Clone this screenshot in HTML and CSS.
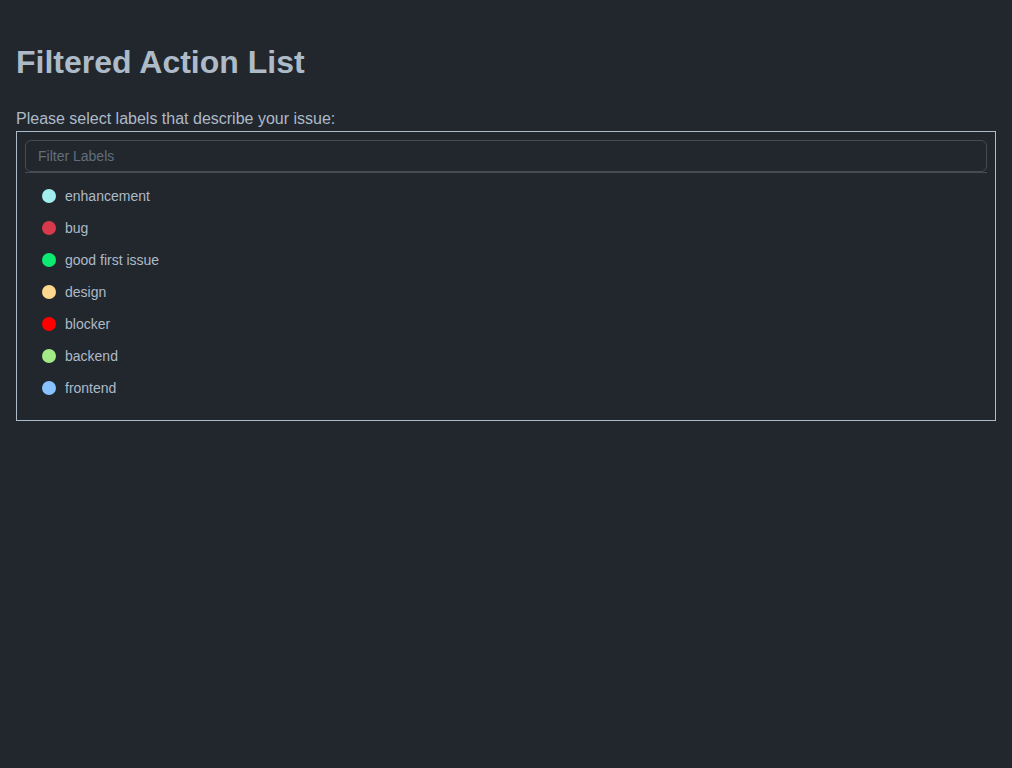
FILE: index.html
```html
<!DOCTYPE html>
<html>
<head>
<meta charset="utf-8">
<link rel="stylesheet" href="styles.css">
</head>
<body>
<main class="page">
  <h1 class="title">Filtered Action List</h1>
  <p class="prompt">Please select labels that describe your issue:</p>
  <div class="panel">
    <div class="filter"><input class="filter-input" type="text" placeholder="Filter Labels"></div>
    <ul class="labels">
      <li class="label"><span class="dot dot-enhancement"></span>enhancement</li>
      <li class="label"><span class="dot dot-bug"></span>bug</li>
      <li class="label"><span class="dot dot-gfi"></span>good first issue</li>
      <li class="label"><span class="dot dot-design"></span>design</li>
      <li class="label"><span class="dot dot-blocker"></span>blocker</li>
      <li class="label"><span class="dot dot-backend"></span>backend</li>
      <li class="label"><span class="dot dot-frontend"></span>frontend</li>
    </ul>
  </div>
</main>
</body>
</html>
```
FILE: styles.css
```css
html, body {
  margin: 0;
  padding: 0;
  background: #22272e;
}
body {
  font-family: "Liberation Sans", Arial, sans-serif;
  color: #adbac7;
}
.page {
  padding: 16px;
}
.title {
  margin: 24px 0 0;
  font-size: 32px;
  line-height: 44px;
  font-weight: 700;
  color: #adbac7;
}
.prompt {
  margin: 25px 0 2px;
  font-size: 16px;
  line-height: 20px;
}
.panel {
  border: 1px solid #adbac7;
  padding: 8px;
}
.filter {
  border-bottom: 1px solid #444c56;
}
.filter-input {
  display: block;
  box-sizing: border-box;
  width: 100%;
  height: 32px;
  margin: 0;
  padding: 0 12px;
  background: #22272e;
  border: 1px solid #444c56;
  border-radius: 6px;
  color: #adbac7;
  font-family: "Liberation Sans", Arial, sans-serif;
  font-size: 14px;
  outline: none;
}
.filter-input::placeholder {
  color: #636e7b;
}
.labels {
  list-style: none;
  margin: 0;
  padding: 7px 0 8px;
}
.label {
  display: flex;
  align-items: center;
  gap: 9px;
  height: 32px;
  padding: 0 17px;
  font-size: 14px;
  color: #adbac7;
}
.dot {
  width: 14px;
  height: 14px;
  border-radius: 50%;
  flex: none;
}
.dot-enhancement { background: #a2eeef; }
.dot-bug { background: #d73a4a; }
.dot-gfi { background: #0cea72; }
.dot-design { background: #ffd78e; }
.dot-blocker { background: #ff0000; }
.dot-backend { background: #a2eb85; }
.dot-frontend { background: #89c3ff; }
```
